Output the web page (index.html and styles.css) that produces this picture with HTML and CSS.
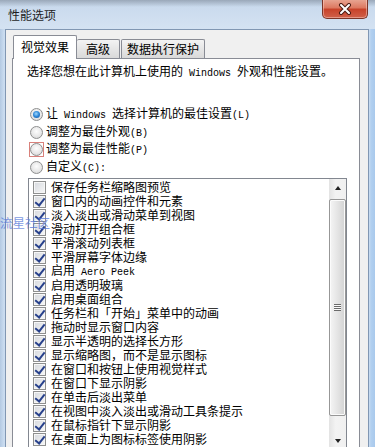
FILE: index.html
```html
<!DOCTYPE html>
<html lang="zh-CN">
<head>
    <meta charset="UTF-8">
    <meta name="viewport" content="width=device-width, initial-scale=1.0">
    <title>性能选项</title>
    <link rel="stylesheet" href="styles.css">
</head>
<body>
    <div class="window">
        <div class="titlebar">
            <span class="title">性能选项</span>
            <button class="close" title="关闭">
                <svg width="14" height="12" viewBox="0 0 14 12">
                    <path d="M3 2 L11 10 M11 2 L3 10" stroke="#4a1c14" stroke-width="4" stroke-linecap="round"/>
                    <path d="M3 2 L11 10 M11 2 L3 10" stroke="#fff" stroke-width="2" stroke-linecap="round"/>
                </svg>
            </button>
        </div>

        <div class="frame">
            <div class="dialog">
                <div class="tabs">
                    <div class="tab active">视觉效果</div>
                    <div class="tab tab-adv">高级</div>
                    <div class="tab tab-dep">数据执行保护</div>
                </div>

                <div class="panel">
                    <p class="intro">选择您想在此计算机上使用的<span class="lat"> Windows </span>外观和性能设置。</p>

                    <div class="options">
                        <label class="radio checked"><span class="ring"><span class="dot"></span></span><span>让<span class="lat"> Windows </span>选择计算机的最佳设置<span class="lat">(L)</span></span></label>
                        <label class="radio"><span class="ring"><span class="dot"></span></span><span>调整为最佳外观<span class="lat">(B)</span></span></label>
                        <label class="radio focused"><span class="ring"><span class="dot"></span></span><span>调整为最佳性能<span class="lat">(P)</span></span></label>
                        <label class="radio"><span class="ring"><span class="dot"></span></span><span>自定义<span class="lat">(C):</span></span></label>
                    </div>

                    <div class="listbox">
                        <ul class="items">
                            <li><span class="box"></span><span>保存任务栏缩略图预览</span></li>
                            <li class="on"><span class="box"></span><span>窗口内的动画控件和元素</span></li>
                            <li class="on"><span class="box"></span><span>淡入淡出或滑动菜单到视图</span></li>
                            <li class="on"><span class="box"></span><span>滑动打开组合框</span></li>
                            <li class="on"><span class="box"></span><span>平滑滚动列表框</span></li>
                            <li class="on"><span class="box"></span><span>平滑屏幕字体边缘</span></li>
                            <li class="on"><span class="box"></span><span>启用<span class="lat"> Aero Peek</span></span></li>
                            <li class="on"><span class="box"></span><span>启用透明玻璃</span></li>
                            <li class="on"><span class="box"></span><span>启用桌面组合</span></li>
                            <li class="on"><span class="box"></span><span>任务栏和「开始」菜单中的动画</span></li>
                            <li class="on"><span class="box"></span><span>拖动时显示窗口内容</span></li>
                            <li class="on"><span class="box"></span><span>显示半透明的选择长方形</span></li>
                            <li class="on"><span class="box"></span><span>显示缩略图，而不是显示图标</span></li>
                            <li class="on"><span class="box"></span><span>在窗口和按钮上使用视觉样式</span></li>
                            <li class="on"><span class="box"></span><span>在窗口下显示阴影</span></li>
                            <li class="on"><span class="box"></span><span>在单击后淡出菜单</span></li>
                            <li class="on"><span class="box"></span><span>在视图中淡入淡出或滑动工具条提示</span></li>
                            <li class="on"><span class="box"></span><span>在鼠标指针下显示阴影</span></li>
                            <li class="on"><span class="box"></span><span>在桌面上为图标标签使用阴影</span></li>
                        </ul>
                        <div class="scrollbar">
                            <div class="arrow up"></div>
                            <div class="track">
                                <div class="thumb"><span class="grip"></span></div>
                            </div>
                            <div class="arrow down"></div>
                        </div>
                    </div>
                </div>
            </div>
        </div>

        <div class="watermark">流星社区</div>
    </div>
</body>
</html>
```

FILE: styles.css
```css
* {
    box-sizing: border-box;
}

body {
    margin: 0;
    font-family: "Noto Sans CJK SC", sans-serif;
    font-size: 12px;
    color: #000;
    background-color: #c4d8ee;
    overflow: hidden;
}

.window {
    position: relative;
    width: 375px;
    height: 447px;
    overflow: hidden;
    display: flex;
    flex-direction: column;
    background: linear-gradient(to right, #b3c9e2 0, #cadcf0 4px, #cadcf0 369px, #b2d0f0 371px, #a9c9ec 375px);
}

/* title bar */
.titlebar {
    height: 29px;
    flex: none;
    display: flex;
    justify-content: space-between;
    align-items: flex-start;
    background:
        linear-gradient(to bottom, rgba(70, 78, 90, 0.35), rgba(70, 78, 90, 0) 7px),
        linear-gradient(to bottom, #c7d8ec, #d4e2f2);
}

.title {
    padding: 8px 0 0 8px;
    line-height: 14px;
    color: #1e1e1e;
}

.close {
    width: 46px;
    height: 20px;
    margin: -1px 7px 0 0;
    padding: 0;
    display: flex;
    justify-content: center;
    align-items: center;
    border: 1px solid #7b3528;
    border-top: none;
    border-radius: 0 0 5px 5px;
    background: linear-gradient(to bottom, #e9a996 0, #dd7a62 45%, #c8432a 55%, #d0614a 100%);
    box-shadow: inset 0 0 0 1px rgba(255, 220, 210, 0.45);
}

/* dialog body */
.frame {
    flex: 1;
    padding: 0 6px 0 5px;
    display: flex;
}

.dialog {
    flex: 1;
    display: flex;
    flex-direction: column;
    padding: 0 8px 0 6px;
    background-color: #f0f0f0;
    border: 1px solid #8197b3;
    border-bottom: none;
}

.tabs {
    display: flex;
    align-items: flex-end;
    padding: 5px 0 0 1px;
    margin-bottom: -1px;
}

.tab {
    height: 19px;
    margin-bottom: 1px;
    line-height: 17px;
    border: 1px solid #898c95;
    border-bottom: none;
    border-radius: 2px 2px 0 0;
    background: linear-gradient(to bottom, #f3f3f3, #e6e6e6 50%, #d9d9d9);
    white-space: nowrap;
}

.tab.active {
    position: relative;
    z-index: 1;
    height: 24px;
    margin-bottom: 0;
    padding: 0 7px;
    line-height: 22px;
    background: #fff;
}

.tab-adv {
    padding: 0 9px;
    border-left: none;
}

.tab-dep {
    padding: 0 5px;
    margin-left: 1px;
}

.panel {
    flex: 1;
    padding: 5px 12px 0 14px;
    background-color: #fff;
    border: 1px solid #898c95;
    border-bottom: none;
}

.lat {
    font-family: "Liberation Mono", monospace;
    font-size: 10px;
    white-space: pre;
}

.intro {
    margin: 0;
    line-height: 14px;
}

/* radio buttons */
.options {
    margin-top: 25px;
    display: flex;
    flex-direction: column;
}

.radio {
    height: 17.5px;
    display: flex;
    align-items: center;
    padding-left: 2px;
    line-height: 14px;
}

.ring {
    width: 15px;
    height: 15px;
    margin-right: 2px;
    display: flex;
    justify-content: center;
    align-items: center;
    border: 1px solid transparent;
}

.radio.focused .ring {
    border-color: #d9817b;
}

.dot {
    width: 13px;
    height: 13px;
    display: flex;
    justify-content: center;
    align-items: center;
    border: 1px solid #8e8f8f;
    border-radius: 50%;
    background: radial-gradient(circle at 50% 40%, #fdfdfd 0, #e8e8e8 55%, #cfcfcf 100%);
}

.radio.checked .dot::after {
    content: "";
    width: 7px;
    height: 7px;
    border-radius: 50%;
    background: radial-gradient(circle at 45% 40%, #9fd8ff 0, #2c86d6 50%, #174f9a 100%);
}

/* list box */
.listbox {
    margin: 2px 0 0 1px;
    height: 272px;
    display: flex;
    border: 1px solid #828790;
}

.items {
    flex: 1;
    margin: 0;
    padding: 1px 0 0 4px;
    list-style: none;
}

.items li {
    height: 14px;
    display: flex;
    align-items: center;
    line-height: 14px;
    white-space: nowrap;
}

.box {
    position: relative;
    width: 13px;
    height: 13px;
    margin-right: 5px;
    flex: none;
    border: 1px solid #8e8f8f;
    background: linear-gradient(135deg, #d6d9de, #f7f7f7);
    box-shadow: inset 0 0 0 1px #f6f6f6;
}

.items li.on .box::after {
    content: "";
    position: absolute;
    left: 3px;
    top: 0;
    width: 4px;
    height: 8px;
    border-right: 2px solid #27408b;
    border-bottom: 2px solid #27408b;
    transform: rotate(38deg);
}

/* scrollbar */
.scrollbar {
    width: 17px;
    flex: none;
    display: flex;
    flex-direction: column;
    background: linear-gradient(to right, #e3e3e3, #f3f3f3 40%, #f0f0f0);
}

.arrow {
    height: 17px;
    flex: none;
    display: flex;
    justify-content: center;
    align-items: center;
}

.arrow::after {
    content: "";
    border-left: 3.5px solid transparent;
    border-right: 3.5px solid transparent;
}

.arrow.up::after {
    border-bottom: 4px solid #222;
}

.arrow.down::after {
    border-top: 4px solid #222;
}

.track {
    flex: 1;
    padding-top: 3px;
}

.thumb {
    height: 217px;
    display: flex;
    justify-content: center;
    align-items: center;
    border: 1px solid #979797;
    border-radius: 2px;
    background: linear-gradient(to right, #f5f5f5, #e6e6e6 45%, #d3d3d3);
    box-shadow: inset 0 0 0 1px #fbfbfb;
}

.grip {
    width: 7px;
    height: 7px;
    background: repeating-linear-gradient(to bottom, #6b6b6b 0, #6b6b6b 1px, #fafafa 1px, #fafafa 2px);
}

.watermark {
    position: absolute;
    left: 0;
    top: 215px;
    font-size: 12.5px;
    line-height: 15px;
    color: #5577d8;
    opacity: 0.75;
}
```
